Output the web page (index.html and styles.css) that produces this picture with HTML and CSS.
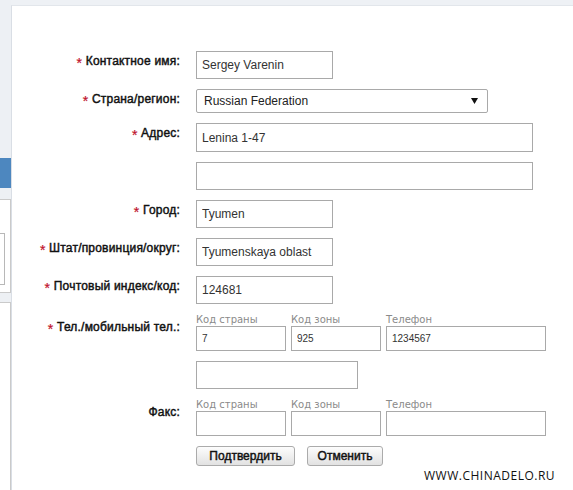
FILE: index.html
```html
<!DOCTYPE html>
<html lang="ru">
<head>
<meta charset="UTF-8" />
<meta name="viewport" content="width=device-width, initial-scale=1" />
<title>Адрес доставки</title>
<link rel="stylesheet" href="styles.css">
</head>
<body>
  <div class="page">
    <aside class="side">
      <div class="side-bar"></div>
      <div class="side-box"><div class="side-inner"></div></div>
      <div class="side-box side-box-long"></div>
    </aside>

    <main class="panel">
      <form class="form">
        <div class="row">
          <label class="lbl"><span class="req">*</span> Контактное имя:</label>
          <div class="fld"><input class="inp inp-md" value="Sergey Varenin"></div>
        </div>

        <div class="row">
          <label class="lbl"><span class="req">*</span> Страна/регион:</label>
          <div class="fld">
            <div class="sel">
              <span>Russian Federation</span>
              <svg width="7" height="6" viewBox="0 0 7 6"><path d="M0 0h7L3.5 6z" fill="#111"/></svg>
            </div>
          </div>
        </div>

        <div class="row">
          <label class="lbl"><span class="req">*</span> Адрес:</label>
          <div class="fld"><input class="inp inp-lg inp-tall" value="Lenina 1-47"></div>
        </div>

        <div class="row">
          <div class="lbl"></div>
          <div class="fld"><input class="inp inp-lg" value=""></div>
        </div>

        <div class="row">
          <label class="lbl"><span class="req">*</span> Город:</label>
          <div class="fld"><input class="inp inp-md" value="Tyumen"></div>
        </div>

        <div class="row">
          <label class="lbl"><span class="req">*</span> Штат/провинция/округ:</label>
          <div class="fld"><input class="inp inp-md" value="Tyumenskaya oblast"></div>
        </div>

        <div class="row">
          <label class="lbl"><span class="req">*</span> Почтовый индекс/код:</label>
          <div class="fld"><input class="inp inp-md" value="124681"></div>
        </div>

        <div class="row">
          <label class="lbl lbl-sub"><span class="req">*</span> Тел./мобильный тел.:</label>
          <div class="fld phone">
            <div class="ph ph-s"><span class="hint">Код страны</span><input class="inp inp-ph" value="7"></div>
            <div class="ph ph-s"><span class="hint">Код зоны</span><input class="inp inp-ph" value="925"></div>
            <div class="ph ph-l"><span class="hint">Телефон</span><input class="inp inp-ph" value="1234567"></div>
          </div>
        </div>

        <div class="row">
          <div class="lbl"></div>
          <div class="fld"><input class="inp inp-mob" value=""></div>
        </div>

        <div class="row">
          <label class="lbl lbl-sub">Факс:</label>
          <div class="fld phone">
            <div class="ph ph-s"><span class="hint">Код страны</span><input class="inp inp-ph" value=""></div>
            <div class="ph ph-s"><span class="hint">Код зоны</span><input class="inp inp-ph" value=""></div>
            <div class="ph ph-l"><span class="hint">Телефон</span><input class="inp inp-ph" value=""></div>
          </div>
        </div>

        <div class="row">
          <div class="lbl"></div>
          <div class="fld btns">
            <button type="submit" class="btn btn-ok">Подтвердить</button>
            <button type="button" class="btn btn-cancel">Отменить</button>
          </div>
        </div>
      </form>

      <div class="mark">WWW.CHINADELO.RU</div>
    </main>
  </div>
</body>
</html>
```

FILE: styles.css
```css
body {
  margin: 0;
  background: #eef1f5;
  font-family: "Liberation Sans", Arial, sans-serif;
  font-size: 12px;
  color: #222;
}
.page {
  display: flex;
  height: 490px;
  overflow: hidden;
}
.side {
  width: 11px;
  flex: none;
  background: #edf0f4;
}
.side-bar {
  margin-top: 158px;
  height: 30px;
  background: #4d87bf;
}
.side-box {
  margin-top: 11px;
  height: 92px;
  background: #fff;
  border: 1px solid #cacaca;
  border-left: none;
}
.side-inner {
  margin-top: 33px;
  width: 4px;
  height: 50px;
  border: 1px solid #b8b8b8;
  border-left: none;
}
.side-box-long {
  margin-top: 9px;
  height: 300px;
  border-bottom: none;
}
.panel {
  position: relative;
  flex: 1;
  margin-top: 5px;
  background: #fff;
  border-top: 1px solid #e2e6eb;
  border-left: 1px solid #d9dee5;
}
.form {
  padding-top: 45px;
  display: flex;
  flex-direction: column;
  gap: 10px;
}
.row {
  display: grid;
  grid-template-columns: 168px 1fr;
  column-gap: 16px;
}
.lbl {
  text-align: right;
  font-size: 12px;
  line-height: 16px;
  letter-spacing: 0.2px;
  padding-top: 2px;
  color: #111;
  -webkit-text-stroke: 0.45px #111;
}
.lbl-sub {
  padding-top: 5px;
}
.req {
  color: #c0122c;
  -webkit-text-stroke: 0.2px #c0122c;
  font-size: 14px;
  vertical-align: -3px;
}
.inp {
  display: block;
  box-sizing: border-box;
  height: 28px;
  margin: 0;
  padding: 0 5px;
  border: 1px solid #a9a9a9;
  font-family: "Liberation Sans", Arial, sans-serif;
  font-size: 12px;
  color: #333;
  background: #fff;
}
.inp-md { width: 137px; }
.inp-lg { width: 337px; }
.inp-tall { height: 29px; }
.inp-mob { width: 162px; }
.sel {
  box-sizing: border-box;
  width: 292px;
  height: 24px;
  border: 1px solid #a9a9a9;
  border-radius: 2px;
  padding: 0 9px 0 7px;
  display: flex;
  align-items: center;
  justify-content: space-between;
  font-size: 12px;
  color: #222;
}
.phone {
  display: flex;
  gap: 5px;
}
.ph {
  display: flex;
  flex-direction: column;
}
.ph-s { width: 90px; }
.ph-l { width: 160px; }
.hint {
  font-family: "DejaVu Sans", Verdana, sans-serif;
  font-size: 10px;
  line-height: 12px;
  color: #8a8a8a;
}
.inp-ph {
  width: 100%;
  height: 25px;
  font-size: 10px;
}
.btns {
  display: flex;
  gap: 12px;
}
.btn {
  height: 20px;
  padding: 0;
  border: 1px solid #ababab;
  border-radius: 3px;
  background: linear-gradient(#fdfdfd, #e2e2e2);
  font-family: "Liberation Sans", Arial, sans-serif;
  font-size: 12px;
  color: #111;
  -webkit-text-stroke: 0.45px #111;
}
.btn-ok { width: 99px; }
.btn-cancel { width: 76px; }
.mark {
  position: absolute;
  left: 412px;
  top: 461px;
  font-family: "Open Sans", sans-serif;
  font-size: 12px;
  letter-spacing: 0.5px;
  color: #111;
}
```
